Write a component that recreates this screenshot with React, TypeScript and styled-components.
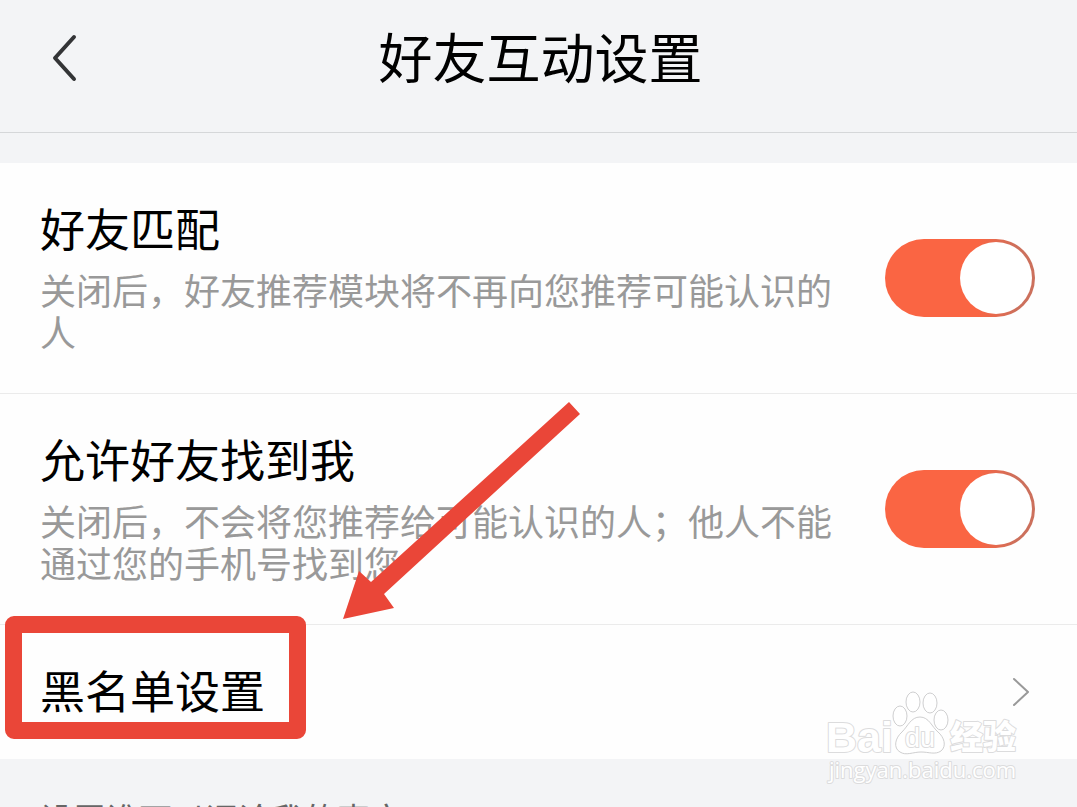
import { useState } from "react";
import styled, { createGlobalStyle } from "styled-components";

const GlobalStyle = createGlobalStyle`
  * {
    box-sizing: border-box;
  }
  body {
    margin: 0;
    background: #f3f4f6;
    color: #000;
    font-family: "Noto Sans CJK SC", sans-serif;
  }
`;

const Page = styled.div`
  position: relative;
  height: 100vh;
  overflow: hidden;
`;

const Header = styled.header`
  display: grid;
  grid-template-columns: 132px 1fr 128px;
  align-items: start;
  padding: 20px 0 36px;
  border-bottom: 1px solid #d5d7d9;
`;

const BackButton = styled.button`
  display: flex;
  align-items: center;
  height: 76px;
  padding: 0 0 0 50px;
  border: 0;
  background: none;
  color: #333436;
`;

const PageTitle = styled.h1`
  margin: 0;
  font-size: 54px;
  font-weight: 400;
  line-height: 72px;
  text-align: center;
`;

const Settings = styled.main`
  margin-top: 30px;
  background: #fefefe;
`;

const Row = styled.section`
  position: relative;
  display: flex;
  align-items: center;
  gap: 52px;
  padding: 33px 42px 33px 40px;
  border-bottom: 1px solid #ebebeb;
`;

const RowText = styled.div`
  flex: 1;
  min-width: 0;
  padding-bottom: 8px;
`;

const RowLabel = styled.label`
  display: block;
  font-size: 45px;
  line-height: 64px;
`;

const Description = styled.p`
  margin: 8px 0 0;
  color: #999;
  font-size: 36px;
  line-height: 42px;
`;

const Switch = styled.input`
  flex: none;
  appearance: none;
  width: 150px;
  height: 78px;
  margin: 0;
  padding: 3px;
  border-radius: 39px;
  background: #ccc;

  &::before {
    content: "";
    display: block;
    width: 72px;
    height: 72px;
    border-radius: 50%;
    background: #fff;
  }

  &:checked {
    background: linear-gradient(90deg, #fa6543 62%, #cc705c 88%);
  }

  &:checked::before {
    margin-left: 72px;
  }
`;

const LinkRow = styled.a`
  position: relative;
  display: flex;
  justify-content: space-between;
  align-items: center;
  padding: 33px 46px 33px 40px;
  color: #000;
  text-decoration: none;
`;

const LinkText = styled.span`
  padding-bottom: 4px;
  font-size: 45px;
  line-height: 64px;
`;

const Highlight = styled.span`
  position: absolute;
  top: -9px;
  left: 5px;
  width: 301px;
  height: 123px;
  border: 17px solid #ea4638;
  border-radius: 9px;
`;

const Arrow = styled.svg`
  position: absolute;
  top: 8px;
  left: 343px;
`;

const SectionCaption = styled.p`
  margin: 0;
  padding: 35px 40px;
  color: #666;
  font-size: 33px;
  line-height: 48px;
`;

const Watermark = styled.svg`
  position: absolute;
  right: 52px;
  bottom: 20px;
`;

type ToggleRowProps = {
  id: string;
  title: string;
  description: string;
  children?: React.ReactNode;
};

function ToggleRow({ id, title, description, children }: ToggleRowProps) {
  const [on, setOn] = useState(true);
  return (
    <Row>
      <RowText>
        <RowLabel htmlFor={id}>{title}</RowLabel>
        <Description>{description}</Description>
      </RowText>
      <Switch id={id} type="checkbox" checked={on} onChange={() => setOn(!on)} />
      {children}
    </Row>
  );
}

function BaiduMark() {
  return (
    <Watermark width="200" height="98" viewBox="0 0 200 98" fill="#fff" stroke="#dcdcdd" strokeWidth="2" strokeLinejoin="round" paintOrder="stroke">
      <g fontFamily="Liberation Sans, sans-serif">
        <text x="1" y="63" fontSize="43" fontWeight="700">Bai</text>
        <text x="125" y="60" fontSize="33" fontWeight="900" fontFamily="Noto Sans CJK SC, sans-serif">经验</text>
        <text x="4" y="89" fontSize="22" fontFamily="Open Sans, sans-serif">jingyan.baidu.com</text>
        <g strokeWidth="1" stroke="#cfcfd0" paintOrder="normal">
          <ellipse cx="75" cy="27" rx="7" ry="10" />
          <ellipse cx="88" cy="13" rx="7" ry="10" />
          <ellipse cx="105" cy="14" rx="7" ry="10" />
          <ellipse cx="116" cy="31" rx="7" ry="10" />
          <path d="M95 28C86 28 83 37 77 43C70 49 68 59 75 63C81 67 88 63 96 63C104 63 110 66 116 62C122 57 119 48 113 43C107 38 104 28 95 28Z" />
        </g>
        <text x="80" y="58" fontSize="27">du</text>
      </g>
    </Watermark>
  );
}

export default function App() {
  return (
    <>
      <GlobalStyle />
      <Page>
        <Header>
          <BackButton type="button" aria-label="返回">
            <svg width="28" height="48" viewBox="0 0 28 48" fill="none" stroke="currentColor" strokeWidth="4" strokeLinecap="round" strokeLinejoin="round">
              <path d="M24 3L5 24L24 45" />
            </svg>
          </BackButton>
          <PageTitle>好友互动设置</PageTitle>
        </Header>
        <Settings>
          <ToggleRow
            id="match"
            title="好友匹配"
            description="关闭后，好友推荐模块将不再向您推荐可能认识的人"
          />
          <ToggleRow
            id="discover"
            title="允许好友找到我"
            description="关闭后，不会将您推荐给可能认识的人；他人不能通过您的手机号找到您"
          >
            <Arrow width="238" height="218" viewBox="0 0 238 218" fill="#ea4638" aria-hidden="true">
              <path d="M226 0L237 12L41 192L51 206L0 217L16 169L28 180Z" />
            </Arrow>
          </ToggleRow>
          <LinkRow href="#blacklist">
            <LinkText>黑名单设置</LinkText>
            <svg width="20" height="30" viewBox="0 0 20 30" fill="none" stroke="#999" strokeWidth="2" strokeLinecap="round" strokeLinejoin="round" aria-hidden="true">
              <path d="M3 2L17 15L3 28" />
            </svg>
            <Highlight />
          </LinkRow>
        </Settings>
        <SectionCaption>设置谁可以评论我的声音</SectionCaption>
        <BaiduMark />
      </Page>
    </>
  );
}
